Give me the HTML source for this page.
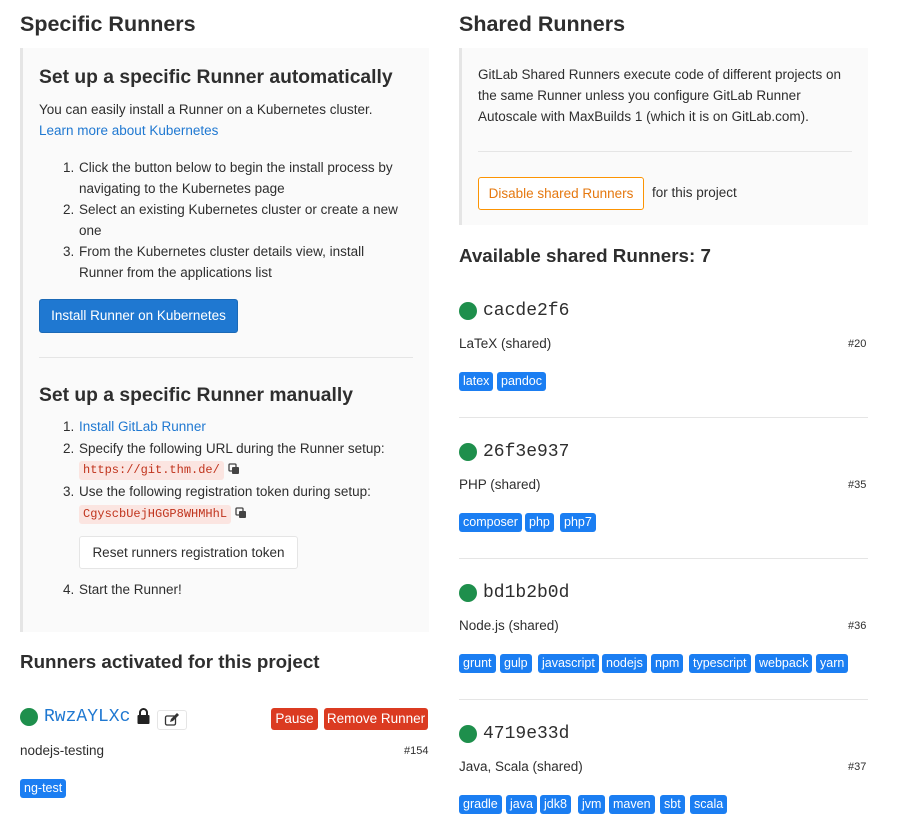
<!DOCTYPE html>
<html><head><meta charset="utf-8"><style>
*{margin:0;padding:0;box-sizing:border-box}
body{width:908px;height:835px;background:#fff;position:relative;overflow:hidden;font-family:"Liberation Sans",sans-serif;color:#2e2e2e;font-size:13.5px}
.t{position:absolute;white-space:nowrap;line-height:20px}
.h1{font-size:21.5px;line-height:30px;color:#2e2e2e;font-weight:bold}
.h2{font-size:19.3px;line-height:28px;font-weight:bold}
.h3{font-size:18.8px;line-height:28px;font-weight:bold}
a,.a{color:#1f78d1}
.panel{position:absolute;background:#fafafa;border-left:3px solid #e5e5e5}
.hr{position:absolute;height:1px;background:#e5e5e5}
.code{position:absolute;background:#fbe5e1;color:#c0341d;font-family:"Liberation Mono",monospace;font-size:12px;line-height:19px;padding:0 4px;border-radius:3px;white-space:nowrap}
.badge{position:absolute;background:#1b7ef2;color:#fff;font-size:12.5px;line-height:19px;height:19px;padding:0 4px;border-radius:3px;white-space:nowrap}
.dot{position:absolute;width:18px;height:18px;border-radius:50%;background:#1e8f4c}
.mono{font-family:"Liberation Mono",monospace;font-size:18px}
.btn{position:absolute;white-space:nowrap;border-radius:3px;text-align:center}
.num{position:absolute;font-size:11px;color:#2e2e2e;white-space:nowrap;line-height:20px}
.copy{position:absolute;width:12px;height:12px}
</style></head><body>
<div class="t h1" style="left:20px;top:9px">Specific Runners</div>
<div class="t h1" style="left:459px;top:9px">Shared Runners</div>

<div class="panel" style="left:20px;top:48px;width:409px;height:584px"></div>
<div class="t h2" style="left:39px;top:64px">Set up a specific Runner automatically</div>
<div class="t" style="left:39px;top:100px">You can easily install a Runner on a Kubernetes cluster.</div>
<div class="t a" style="left:39px;top:121px">Learn more about Kubernetes</div>
<div class="t" style="left:63px;top:158px">1.</div><div class="t" style="left:79px;top:158px">Click the button below to begin the install process by</div>
<div class="t" style="left:79px;top:179px">navigating to the Kubernetes page</div>
<div class="t" style="left:63px;top:200px">2.</div><div class="t" style="left:79px;top:200px">Select an existing Kubernetes cluster or create a new</div>
<div class="t" style="left:79px;top:221px">one</div>
<div class="t" style="left:63px;top:242px">3.</div><div class="t" style="left:79px;top:242px">From the Kubernetes cluster details view, install</div>
<div class="t" style="left:79px;top:263px">Runner from the applications list</div>
<div class="btn" style="left:39px;top:299px;width:199px;height:34px;background:#1f78d1;border:1px solid #1b69b6;color:#fff;line-height:32px">Install Runner on Kubernetes</div>
<div class="hr" style="left:39px;top:357px;width:374px"></div>
<div class="t h2" style="left:39px;top:382px">Set up a specific Runner manually</div>
<div class="t" style="left:63px;top:417px">1.</div><div class="t a" style="left:79px;top:417px">Install GitLab Runner</div>
<div class="t" style="left:63px;top:439px">2.</div><div class="t" style="left:79px;top:439px">Specify the following URL during the Runner setup:</div>
<div class="code" style="left:79px;top:461px">https://git.thm.de/</div>
<svg class="copy" style="left:228px;top:463px" viewBox="0 0 12 12"><rect x="1" y="1" width="7" height="7" rx="1" fill="none" stroke="#444" stroke-width="1.3"/><rect x="4" y="4" width="7" height="7" rx="1" fill="#444"/></svg>
<div class="t" style="left:63px;top:482px">3.</div><div class="t" style="left:79px;top:482px">Use the following registration token during setup:</div>
<div class="code" style="left:79px;top:505px">CgyscbUejHGGP8WHMHhL</div>
<svg class="copy" style="left:235px;top:507px" viewBox="0 0 12 12"><rect x="1" y="1" width="7" height="7" rx="1" fill="none" stroke="#444" stroke-width="1.3"/><rect x="4" y="4" width="7" height="7" rx="1" fill="#444"/></svg>
<div class="btn" style="left:79px;top:536px;width:219px;height:33px;background:#fff;border:1px solid #e5e5e5;line-height:31px">Reset runners registration token</div>
<div class="t" style="left:63px;top:580px">4.</div><div class="t" style="left:79px;top:580px">Start the Runner!</div>

<div class="t h3" style="left:20px;top:648px">Runners activated for this project</div>
<div class="dot" style="left:20px;top:708px"></div>
<div class="t mono a" style="left:44px;top:707px;font-size:18px">RwzAYLXc</div>
<svg style="position:absolute;left:136px;top:708px" width="15" height="16" viewBox="0 0 15 16"><path d="M4 7V4.5a3.5 3.5 0 0 1 7 0V7" fill="none" stroke="#222" stroke-width="2"/><rect x="1.5" y="7" width="12" height="9" rx="1" fill="#222"/></svg>
<div class="btn" style="left:157px;top:710px;width:30px;height:20px;border:1px solid #e5e5e5;background:#fff"><svg width="16" height="14" viewBox="0 0 16 14" style="margin-top:2px"><rect x="1.5" y="3" width="10" height="9" rx="1.5" fill="none" stroke="#333" stroke-width="1.3"/><path d="M6 9l1-3 6-6 2 2-6 6z" fill="#333"/></svg></div>
<div class="btn" style="left:271px;top:708px;width:47px;height:22px;background:#db3b21;color:#fff;line-height:22px">Pause</div>
<div class="btn" style="left:324px;top:708px;width:104px;height:22px;background:#db3b21;color:#fff;line-height:22px">Remove Runner</div>
<div class="t" style="left:20px;top:741px">nodejs-testing</div>
<div class="num" style="left:404px;top:741px">#154</div>
<div class="badge" style="left:20px;top:779px">ng-test</div>

<div class="panel" style="left:459px;top:48px;width:409px;height:177px"></div>
<div class="t" style="left:478px;top:65px">GitLab Shared Runners execute code of different projects on</div>
<div class="t" style="left:478px;top:86px">the same Runner unless you configure GitLab Runner</div>
<div class="t" style="left:478px;top:107px">Autoscale with MaxBuilds 1 (which it is on GitLab.com).</div>
<div class="hr" style="left:478px;top:151px;width:374px"></div>
<div class="btn" style="left:478px;top:177px;width:166px;height:33px;background:#fff;border:1px solid #fc9403;color:#e5780f;line-height:31px">Disable shared Runners</div>
<div class="t" style="left:652px;top:183px">for this project</div>
<div class="t h3" style="left:459px;top:242px">Available shared Runners: 7</div>

<div class="dot" style="left:459px;top:302px"></div><div class="t mono" style="left:483px;top:301px">cacde2f6</div>
<div class="t" style="left:459px;top:334px">LaTeX (shared)</div><div class="num" style="left:848px;top:334px">#20</div>
<div class="badge" style="left:459px;top:372px">latex</div><div class="badge" style="left:497px;top:372px">pandoc</div>
<div class="hr" style="left:459px;top:417px;width:409px"></div>

<div class="dot" style="left:459px;top:443px"></div><div class="t mono" style="left:483px;top:442px">26f3e937</div>
<div class="t" style="left:459px;top:475px">PHP (shared)</div><div class="num" style="left:848px;top:475px">#35</div>
<div class="badge" style="left:459px;top:513px">composer</div><div class="badge" style="left:525px;top:513px">php</div><div class="badge" style="left:560px;top:513px">php7</div>
<div class="hr" style="left:459px;top:558px;width:409px"></div>

<div class="dot" style="left:459px;top:584px"></div><div class="t mono" style="left:483px;top:583px">bd1b2b0d</div>
<div class="t" style="left:459px;top:616px">Node.js (shared)</div><div class="num" style="left:848px;top:616px">#36</div>
<div class="badge" style="left:459px;top:654px">grunt</div><div class="badge" style="left:500px;top:654px">gulp</div><div class="badge" style="left:538px;top:654px">javascript</div><div class="badge" style="left:602px;top:654px">nodejs</div><div class="badge" style="left:651px;top:654px">npm</div><div class="badge" style="left:689px;top:654px">typescript</div><div class="badge" style="left:755px;top:654px">webpack</div><div class="badge" style="left:816px;top:654px">yarn</div>
<div class="hr" style="left:459px;top:699px;width:409px"></div>

<div class="dot" style="left:459px;top:725px"></div><div class="t mono" style="left:483px;top:724px">4719e33d</div>
<div class="t" style="left:459px;top:757px">Java, Scala (shared)</div><div class="num" style="left:848px;top:757px">#37</div>
<div class="badge" style="left:459px;top:795px">gradle</div><div class="badge" style="left:506px;top:795px">java</div><div class="badge" style="left:540px;top:795px">jdk8</div><div class="badge" style="left:578px;top:795px">jvm</div><div class="badge" style="left:609px;top:795px">maven</div><div class="badge" style="left:660px;top:795px">sbt</div><div class="badge" style="left:690px;top:795px">scala</div>
</body></html>
